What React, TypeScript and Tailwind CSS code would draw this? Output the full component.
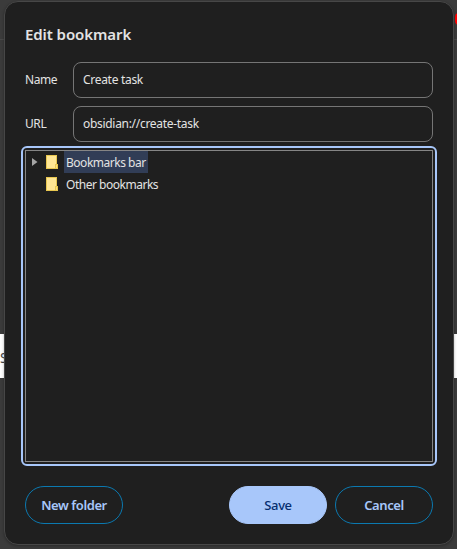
import React from 'react';

function Field({ label, value }: { label: string; value: string }) {
  return (
    <label className="flex h-9 items-center">
      <span className="w-12 text-[12px] tracking-[-0.4px]">{label}</span>
      <input
        defaultValue={value}
        className="h-9 w-[360px] rounded-[8px] border border-[#757575] bg-transparent px-[9px] pb-[1px] text-[12px] tracking-[-0.3px] text-[#e3e3e3] outline-none"
      />
    </label>
  );
}

function FolderIcon() {
  return (
    <svg width="12" height="14" viewBox="0 0 12 14" shapeRendering="crispEdges" className="shrink-0">
      <path d="M0 0h11v9h1v5H0z" fill="#e8c750" />
      <path d="M1 1h9v8H9v4H1z" fill="#ffe694" />
      <path d="M10 10h1v3h-1z" fill="#ffe07a" />
    </svg>
  );
}

function FolderRow({ name, selected }: { name: string; selected?: boolean }) {
  return (
    <div className="flex h-[22px] items-center pl-[6px]">
      <div className="w-[14px]">
        {selected && (
          <svg width="6" height="8" viewBox="0 0 6 8">
            <path d="M0 0L5.5 4L0 8z" fill="#a5a5a5" />
          </svg>
        )}
      </div>
      <FolderIcon />
      <span
        className={`ml-[6px] flex h-[22px] items-center px-[2px] pt-[2px] text-[12px] tracking-[-0.48px] ${selected ? 'bg-[#313d56]' : ''}`}
      >
        {name}
      </span>
    </div>
  );
}

function Button({ children, primary }: { children: React.ReactNode; primary?: boolean }) {
  return (
    <button
      className={`h-[38px] w-[98px] rounded-full border pt-[2px] text-[13px] tracking-[-0.4px] ${
        primary
          ? 'border-[#a8c7fa] bg-[#a8c7fa] font-medium text-[#062e6f]'
          : 'border-[#0b79b0] font-semibold text-[#a8c7fa]'
      }`}
    >
      {children}
    </button>
  );
}

export default function App() {
  return (
    <div className="relative h-[549px] w-[457px] overflow-hidden bg-[#3b3b3b] font-['Noto_Sans','Open_Sans',sans-serif]">
      <div className="absolute left-0 top-[39px] h-px w-full bg-[#484848]" />
      <div className="absolute left-0 top-[334px] h-11 w-full overflow-hidden bg-white text-[14px] text-[#444]">
        <span className="absolute left-0 top-[13px]">S</span>
      </div>
      <div className="absolute left-[455px] top-[13px] h-3 w-3 rounded-[4px] bg-[#ff0000]" />
      <main className="absolute left-1 top-px flex h-[544px] w-[450px] flex-col rounded-[14px] border border-[#474747] bg-[#1f1f1f] px-5 pt-5 text-[#e3e3e3] shadow-[0_1px_3px_rgba(0,0,0,0.3)]">
        <h1 className="h-6 text-[15px] leading-6 font-semibold tracking-[-0.08px]">Edit bookmark</h1>
        <div className="mt-4 flex flex-col gap-2">
          <Field label="Name" value="Create task" />
          <Field label="URL" value="obsidian://create-task" />
        </div>
        <div className="-mx-1 mt-1 h-[320px] w-[416px] shrink-0 rounded-[6px] border-2 border-[#a8c7fa] p-[2px]">
          <div className="h-full border border-[#858585]">
            <FolderRow name="Bookmarks bar" selected />
            <FolderRow name="Other bookmarks" />
          </div>
        </div>
        <div className="mt-5 flex w-[408px] gap-2">
          <Button>New folder</Button>
          <div className="ml-auto flex gap-2">
            <Button primary>Save</Button>
            <Button>Cancel</Button>
          </div>
        </div>
      </main>
    </div>
  );
}
